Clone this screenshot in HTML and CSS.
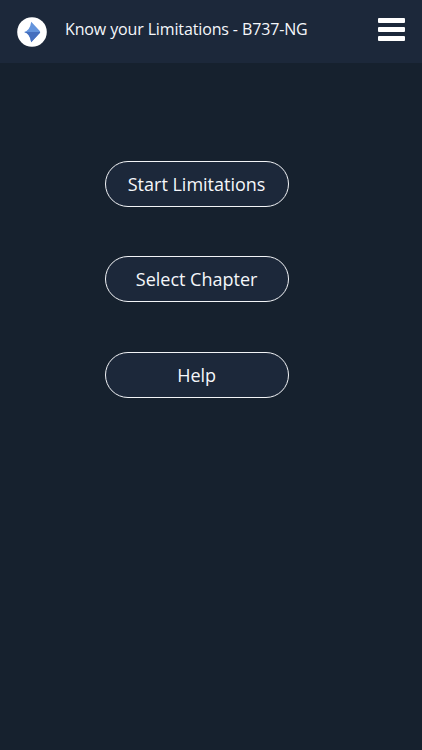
FILE: index.html
```html
<!DOCTYPE html>
<html lang="en">
<head>
    <meta charset="UTF-8">
    <meta name="viewport" content="width=device-width, initial-scale=1.0">
    <title>Know your Limitations - B737-NG</title>
    <link rel="stylesheet" href="styles.css">
</head>
<body>
    <header class="topbar">
        <svg class="logo" viewBox="0 0 30 30" width="30" height="30">
            <circle cx="15" cy="15" r="14.8" fill="#fff"/>
            <path d="M14.2 4.8 L22.8 14 Q23.6 15 22.8 16 L14.2 25.2 Q13 16.5 7.2 15 Q13 13.5 14.2 4.8 Z" fill="#6494dc"/>
            <path d="M7.2 15 H23.2 L22.8 16 L14.2 25.2 Q13 16.5 7.2 15 Z" fill="#456fbe"/>
        </svg>
        <h1 class="title">Know your Limitations - B737-NG</h1>
        <button class="menu" aria-label="Menu">
            <span></span>
            <span></span>
            <span></span>
        </button>
    </header>
    <main class="buttons">
        <button class="btn">Start Limitations</button>
        <button class="btn">Select Chapter</button>
        <button class="btn">Help</button>
    </main>
</body>
</html>
```
FILE: styles.css
```css
body {
    margin: 0;
    min-height: 100vh;
    background-color: #16212e;
    color: #f5f7fa;
    font-family: "Open Sans", sans-serif;
}
.topbar {
    display: flex;
    align-items: flex-start;
    box-sizing: border-box;
    height: 63px;
    padding: 17px 17px 0;
    background-color: #1c283a;
}
.logo {
    display: block;
}
.title {
    margin: 0 0 0 18px;
    font-size: 16px;
    font-weight: 400;
    letter-spacing: -0.13px;
    line-height: 24px;
    white-space: nowrap;
}
.menu {
    display: flex;
    flex-direction: column;
    gap: 4px;
    margin: 1px 0 0 auto;
    padding: 0;
    border: none;
    background: none;
}
.menu span {
    width: 27px;
    height: 5px;
    border-radius: 1px;
    background-color: #fff;
}
.buttons {
    display: flex;
    flex-direction: column;
    gap: 49.4px;
    width: 184px;
    margin: 98px 0 0 104.6px;
}
.btn {
    height: 46px;
    padding: 0;
    border: 1px solid #f2f4f7;
    border-radius: 23px;
    background-color: #1c283a;
    color: inherit;
    font-family: inherit;
    font-size: 18px;
}
```
